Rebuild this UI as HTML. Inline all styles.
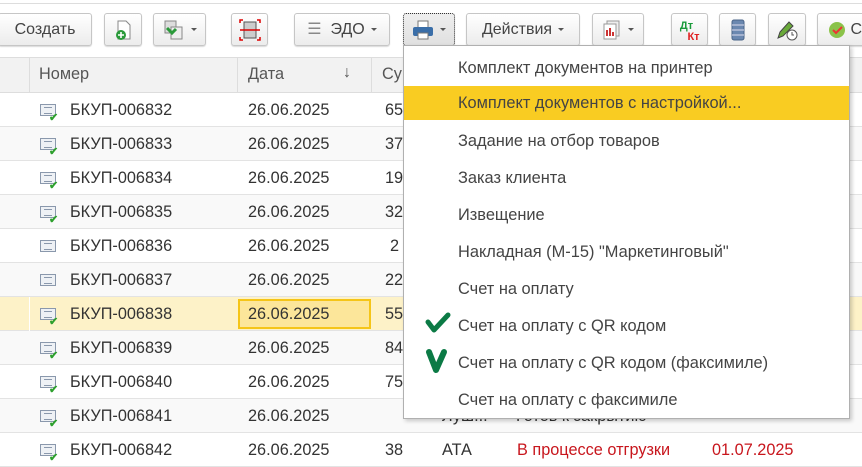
<!DOCTYPE html>
<html><head><meta charset="utf-8"><style>
*{box-sizing:border-box;margin:0;padding:0}
body{width:862px;height:453px;overflow:hidden;background:#fff;font-family:"Liberation Sans",Arial,sans-serif;color:#333;position:relative;font-size:16px}
.a{position:absolute}
.btn{position:absolute;top:13px;height:33px;border:1px solid #c6c6c6;border-radius:3px;background:linear-gradient(#fff,#ececec);box-shadow:0 1px 1px rgba(0,0,0,.15);font-size:16px;color:#444;line-height:31px;text-align:center}
.dd{display:inline-block;width:0;height:0;border-left:3px solid transparent;border-right:3px solid transparent;border-top:3px solid #555;vertical-align:middle;margin-left:6px}
.row{position:absolute;left:0;width:862px;height:34px;border-bottom:1px solid #e3e3e3}
.row span{position:absolute;top:8px;font-size:16.3px;color:#333}
.ic{position:absolute;left:40px;top:11px;width:16px;height:12px;border:1px solid #8a98ac;background:#eef1f5}
.ic:before{content:"";position:absolute;left:3px;top:2px;width:8px;height:5px;border-top:1px solid #8a98ac;border-bottom:1px solid #8a98ac}
.ck{position:absolute;left:49px;top:18px;color:#2ea02e;font-size:11px;font-weight:bold}
.menu{position:absolute;left:403px;top:45px;width:447px;height:374px;background:#fff;border:1px solid #b0b0b0;box-shadow:2px 2px 4px rgba(0,0,0,.2)}
.mi{position:absolute;left:0;width:445px;height:34px;line-height:34px;padding-left:54px;font-size:16.4px;color:#444}
</style></head><body>
<div class="a" style="left:0;top:0;width:862px;height:4px;border-bottom:1px solid #ddd"></div>
<div class="btn" style="left:-2px;width:94px">Создать</div>
<div class="btn" style="left:104px;width:38px"><svg width="20" height="22" style="margin-top:5px"><path d="M5 2h8l4 4v14H5z" fill="#fff" stroke="#888"/><circle cx="8" cy="16" r="5" fill="#2a9a3a"/><path d="M8 13v6M5 16h6" stroke="#fff" stroke-width="1.6"/></svg></div>
<div class="btn" style="left:153px;width:53px"><svg width="22" height="20" style="margin-top:6px;vertical-align:top"><rect x="2" y="1" width="11" height="12" fill="#ddd" stroke="#888"/><rect x="8" y="7" width="11" height="12" fill="#eee" stroke="#888"/><path d="M4 8l5 5 4-4" stroke="#2a9a3a" stroke-width="3" fill="none"/></svg><span class="dd"></span></div>
<div class="btn" style="left:231px;width:37px"><svg width="22" height="22" style="margin-top:5px"><rect x="5" y="3" width="12" height="16" fill="#ccc" stroke="#555"/><path d="M1 11h20" stroke="#d00" stroke-width="1.5"/><path d="M1 4V1h3M18 1h3v3M1 18v3h3M18 21h3v-3" stroke="#d00" fill="none" stroke-width="1.5"/></svg></div>
<div class="btn" style="left:294px;width:96px"><span style="color:#888">☰</span>&nbsp; ЭДО<span class="dd"></span></div>
<div class="btn" style="left:403px;width:52px;border:1px dotted #333;background:linear-gradient(#eee,#e0e0e0)"><svg width="22" height="20" style="margin-top:6px;vertical-align:top"><rect x="6" y="1" width="10" height="7" fill="#fff" stroke="#777"/><rect x="1" y="7" width="20" height="9" rx="2" fill="#3a6ea8"/><rect x="6" y="13" width="10" height="6" fill="#fff" stroke="#777"/></svg><span class="dd"></span></div>
<div class="btn" style="left:466px;width:114px">Действия<span class="dd"></span></div>
<div class="btn" style="left:592px;width:52px"><svg width="20" height="20" style="margin-top:6px;vertical-align:top"><rect x="5" y="1" width="12" height="15" fill="#eee" stroke="#999"/><rect x="2" y="4" width="12" height="15" fill="#fff" stroke="#999"/><path d="M5 16v-6M8 16v-8M11 16v-4" stroke="#c33" stroke-width="2"/></svg><span class="dd"></span></div>
<div class="btn" style="left:671px;width:37px;line-height:11px;font-size:11px;font-weight:bold;padding-top:7px"><span style="color:#1a9a3a;margin-left:-6px">Дт</span><br><span style="color:#e02020;margin-left:8px">Кт</span></div>
<div class="btn" style="left:719px;width:37px"><svg width="14" height="22" style="margin-top:5px"><rect x="1" y="1" width="12" height="20" rx="2" fill="#6b88b0" stroke="#4a6488"/><path d="M1 6h12M1 11h12M1 16h12" stroke="#dde" /></svg></div>
<div class="btn" style="left:768px;width:38px"><svg width="24" height="22" style="margin-top:5px"><path d="M3 19l2-6 9-10 4 4-10 10z" fill="#6aaa3a" stroke="#444"/><circle cx="17" cy="16" r="5" fill="#fff" stroke="#555"/><path d="M17 13v3h2" stroke="#555" fill="none"/></svg></div>
<div class="btn" style="left:817px;width:60px;text-align:left;padding-left:10px"><svg width="18" height="18" style="vertical-align:middle"><circle cx="9" cy="9" r="8" fill="#8bc34a"/><path d="M5 9l3 3 6-6" stroke="#e33" stroke-width="2" fill="none"/></svg> С</div>
<div class="a" style="left:0;top:57px;width:862px;height:36px;background:#f2f2f2;border-top:1px solid #ddd;border-bottom:1px solid #ddd"></div>
<div class="a" style="left:29px;top:57px;height:36px;border-left:1px solid #ddd"></div>
<div class="a" style="left:237px;top:57px;height:36px;border-left:1px solid #ddd"></div>
<div class="a" style="left:371px;top:57px;height:36px;border-left:1px solid #ddd"></div>
<div class="a" style="left:39px;top:65px;color:#555;font-size:16.3px">Номер</div>
<div class="a" style="left:248px;top:65px;color:#555;font-size:16.3px">Дата</div>
<div class="a" style="left:343px;top:64px;color:#555">↓</div>
<div class="a" style="left:382px;top:65px;color:#555;font-size:16.3px">Су</div>
<div class="row" style="top:93px"><div class="ic"></div><div class="ck">✔</div><span style="left:70px">БКУП-006832</span><span style="left:248px">26.06.2025</span><span style="left:385px">65</span></div>
<div class="row" style="top:127px;background:#f9f9f9"><div class="ic"></div><div class="ck">✔</div><span style="left:70px">БКУП-006833</span><span style="left:248px">26.06.2025</span><span style="left:385px">37</span></div>
<div class="row" style="top:161px"><div class="ic"></div><div class="ck">✔</div><span style="left:70px">БКУП-006834</span><span style="left:248px">26.06.2025</span><span style="left:385px">19</span></div>
<div class="row" style="top:195px;background:#f9f9f9"><div class="ic"></div><div class="ck">✔</div><span style="left:70px">БКУП-006835</span><span style="left:248px">26.06.2025</span><span style="left:385px">32</span></div>
<div class="row" style="top:229px"><div class="ic"></div><span style="left:70px">БКУП-006836</span><span style="left:248px">26.06.2025</span><span style="left:390px">2</span></div>
<div class="row" style="top:263px;background:#f9f9f9"><div class="ic"></div><span style="left:70px">БКУП-006837</span><span style="left:248px">26.06.2025</span><span style="left:385px">22</span></div>
<div class="row" style="top:297px;background:#fdf2c8"><div class="a" style="left:29px;top:0;height:34px;border-left:1px solid #fff"></div><div class="a" style="left:238px;top:2px;width:133px;height:30px;background:#fce69a;border:2px solid #f5c518"></div><div class="ic"></div><div class="ck">✔</div><span style="left:70px">БКУП-006838</span><span style="left:248px">26.06.2025</span><span style="left:385px">55</span></div>
<div class="row" style="top:331px;background:#f9f9f9"><div class="ic"></div><div class="ck">✔</div><span style="left:70px">БКУП-006839</span><span style="left:248px">26.06.2025</span><span style="left:385px">84</span></div>
<div class="row" style="top:365px"><div class="ic"></div><div class="ck">✔</div><span style="left:70px">БКУП-006840</span><span style="left:248px">26.06.2025</span><span style="left:385px">75</span></div>
<div class="row" style="top:399px;background:#f9f9f9"><div class="ic"></div><div class="ck">✔</div><span style="left:70px">БКУП-006841</span><span style="left:248px">26.06.2025</span><span style="left:442px">Луш...</span><span style="left:516px">Готов к закрытию</span></div>
<div class="row" style="top:433px"><div class="ic"></div><div class="ck">✔</div><span style="left:70px">БКУП-006842</span><span style="left:248px">26.06.2025</span><span style="left:385px">38</span><span style="left:442px">АТА</span><span style="left:517px;color:#c8161d">В процессе отгрузки</span><span style="left:712px;color:#c8161d">01.07.2025</span></div>
<div class="menu">
<div class="mi" style="top:5px">Комплект документов на принтер</div>
<div class="mi" style="top:40px;background:#f9cc22">Комплект документов с настройкой...</div>
<div class="mi" style="top:78px">Задание на отбор товаров</div>
<div class="mi" style="top:115px">Заказ клиента</div>
<div class="mi" style="top:152px">Извещение</div>
<div class="mi" style="top:189px">Накладная (М-15) "Маркетинговый"</div>
<div class="mi" style="top:226px">Счет на оплату</div>
<div class="mi" style="top:263px">Счет на оплату с QR кодом</div>
<div class="mi" style="top:300px">Счет на оплату с QR кодом (факсимиле)</div>
<div class="mi" style="top:337px">Счет на оплату с факсимиле</div>
<svg class="a" style="left:20px;top:266px" width="28" height="22"><path d="M4 10l6 8L24 3" stroke="#0b7a45" stroke-width="5" fill="none" stroke-linecap="round" stroke-linejoin="round"/></svg>
<svg class="a" style="left:20px;top:302px" width="28" height="26"><path d="M5 4l7 18L20 4" stroke="#0b7a45" stroke-width="6" fill="none" stroke-linecap="round" stroke-linejoin="round"/></svg>
</div>
</body></html>
